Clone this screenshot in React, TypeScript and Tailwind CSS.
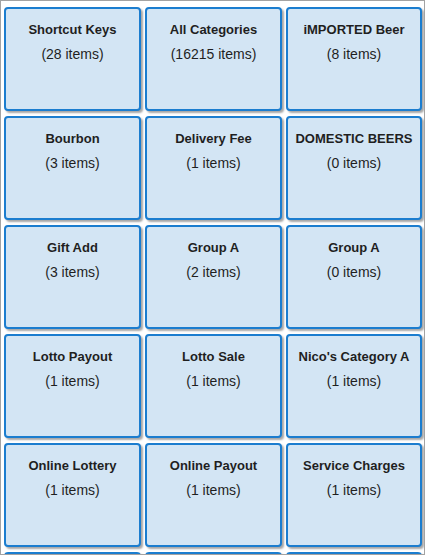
import React from "react";

const items: [string, string][] = [
  ["Shortcut Keys", "(28 items)"],
  ["All Categories", "(16215 items)"],
  ["iMPORTED Beer", "(8 items)"],
  ["Bourbon", "(3 items)"],
  ["Delivery Fee", "(1 items)"],
  ["DOMESTIC BEERS", "(0 items)"],
  ["Gift Add", "(3 items)"],
  ["Group A", "(2 items)"],
  ["Group A", "(0 items)"],
  ["Lotto Payout", "(1 items)"],
  ["Lotto Sale", "(1 items)"],
  ["Nico's Category A", "(1 items)"],
  ["Online Lottery", "(1 items)"],
  ["Online Payout", "(1 items)"],
  ["Service Charges", "(1 items)"],
  ["", ""],
  ["", ""],
  ["", ""],
];

export default function App() {
  return (
    <div
      className="w-[425px] h-[555px] overflow-hidden border border-[#a3a3a3] bg-white"
      style={{ fontFamily: '"Liberation Sans", Arial, sans-serif' }}
    >
      <div className="grid grid-cols-[137px_137px_136px] gap-x-[4px] gap-y-[5px] pt-[6px] pl-[3px]">
        {items.map(([title, count], i) => (
          <div
            key={i}
            className="h-[104px] rounded-[4px] border-2 border-[#1b7dcf] bg-[#d3e5f4] shadow-[2px_2px_2px_rgba(0,0,0,0.35)] flex flex-col items-center pt-[13px] text-[#1f1f1f]"
          >
            {title && (
              <>
                <div className="text-[13px] font-bold leading-[16px] whitespace-nowrap">{title}</div>
                <div className="text-[14px] leading-[16px] mt-[8px]">{count}</div>
              </>
            )}
          </div>
        ))}
      </div>
    </div>
  );
}
